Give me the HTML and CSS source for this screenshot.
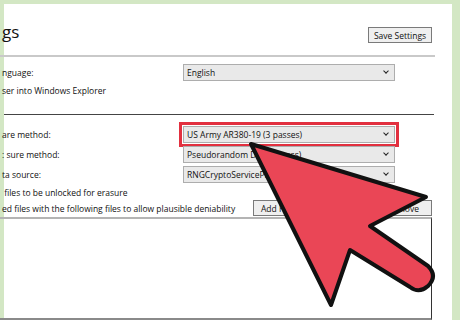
FILE: index.html
```html
<!DOCTYPE html>
<html lang="en">
  <head>
    <meta charset="UTF-8" />
    <title>Eraser Settings</title>
    <link rel="stylesheet" href="styles.css">
  </head>
  <body>
    <div class="window">
      <div class="header">
        <h1 class="title">gs</h1>
        <button class="btn save">Save Settings</button>
      </div>

      <div class="row lang">
        <span class="label">nguage:</span>
        <div class="select"><span>English</span><i class="chev"></i></div>
      </div>
      <div class="row plain">
        <span class="label">ser into Windows Explorer</span>
      </div>

      <div class="sep"></div>

      <div class="row">
        <span class="label">are method:</span>
        <div class="select marked"><span>US Army AR380-19 (3 passes)</span><i class="chev"></i></div>
      </div>
      <div class="row">
        <span class="label">: sure method:</span>
        <div class="select"><span>Pseudorandom Data (1 pass)</span><i class="chev"></i></div>
      </div>
      <div class="row">
        <span class="label">ta source:</span>
        <div class="select"><span>RNGCryptoServiceProvider</span><i class="chev"></i></div>
      </div>
      <div class="row plain">
        <span class="label">&nbsp;files to be unlocked for erasure</span>
      </div>
      <div class="row buttons">
        <span class="label">ed files with the following files to allow plausible deniability</span>
        <div class="actions">
          <button class="btn">Add Files...</button>
          <button class="btn">Remove</button>
        </div>
      </div>

      <div class="list"></div>
    </div>

    <svg class="pointer" width="460" height="320" viewBox="0 0 460 320">
      <path d="M251 144 L426 197 L370 226 L428 266 Q438 276 428 286 Q419 294 410 287 L350 250 L331 305 Z"
            fill="#ea4656" stroke="#111" stroke-width="4" stroke-linejoin="round" />
    </svg>
  </body>
</html>
```

FILE: styles.css
```css
body {
  margin: 0;
  width: 460px;
  height: 320px;
  overflow: hidden;
  background-color: #d3e7c4;
  font-family: "Open Sans", "Noto Sans", sans-serif;
  font-size: 8.5px;
  color: #111;
  position: relative;
}
.window {
  margin-top: 4px;
  width: 452px;
  height: 316px;
  background: #fff;
  box-shadow: inset 4px 0 0 #d3e7c4;
  display: flex;
  flex-direction: column;
}
.header {
  height: 51px;
  flex: none;
  margin-right: 17px;
  border-bottom: 2px solid #c9c9c9;
  display: flex;
  align-items: flex-start;
  justify-content: space-between;
}
.title {
  margin: 18px 0 0 2px;
  font-size: 17px;
  font-weight: 400;
  line-height: 20px;
}
.btn {
  font-family: inherit;
  font-size: 8.5px;
  color: #111;
  background: #efefef;
  border: 1px solid #7a7a7a;
  padding: 0;
  height: 16px;
}
.save {
  margin: 23px 3px 0 0;
  width: 64px;
}
.row {
  display: flex;
  flex: none;
  align-items: center;
  height: 20px;
  padding-left: 2px;
}
.row.lang {
  margin-top: 5px;
}
.label {
  width: 181px;
  white-space: nowrap;
}
.select {
  width: 212px;
  height: 17px;
  border: 1px solid #adadad;
  background: #e9e9e9;
  display: flex;
  align-items: center;
  justify-content: space-between;
  padding: 0 6px 0 3px;
  box-sizing: border-box;
}
.select.marked {
  outline: 3px solid #e2303f;
  outline-offset: 1px;
}
.chev {
  width: 3px;
  height: 3px;
  border-right: 1px solid #222;
  border-bottom: 1px solid #222;
  transform: rotate(45deg);
  margin-top: -2px;
}
.row.plain {
  height: 16px;
}
.sep {
  height: 1px;
  flex: none;
  margin: 16px 18px 9px 4px;
  background: #444;
}
.row.buttons {
  height: 16px;
}
.row.buttons .label {
  width: 251px;
}
.actions {
  flex: 1;
  display: flex;
  justify-content: space-between;
  margin-right: 20px;
}
.actions .btn {
  width: 58px;
}
.list {
  margin: 1px 20px 0 0;
  flex: 1;
  border-top: 2px solid #b4b4b4;
  border-right: 1px solid #333;
  border-bottom: 2px solid #8a8a8a;
}
.pointer {
  position: absolute;
  left: 0;
  top: 0;
}
```
